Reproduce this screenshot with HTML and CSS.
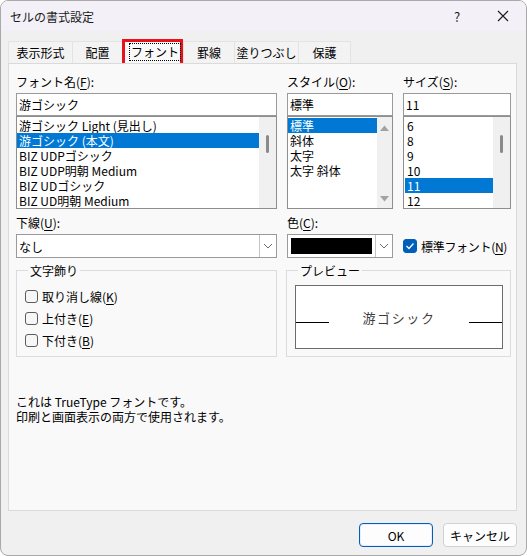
FILE: index.html
```html
<!DOCTYPE html>
<html lang="ja">
<head>
<meta charset="utf-8">
<title>セルの書式設定</title>
<link rel="stylesheet" href="styles.css">
</head>
<body>
<div class="window">
  <div class="titlebar">
    <span class="title">セルの書式設定</span>
    <span class="help">?</span>
    <span class="close">
      <svg width="12" height="12" viewBox="0 0 12 12"><path d="M1 1L11 11M11 1L1 11" stroke="#1a1a1a" stroke-width="1.1" fill="none"/></svg>
    </span>
  </div>
  <div class="body">
    <div class="tabs">
      <div class="tab w1">表示形式</div>
      <div class="tab w2">配置</div>
      <div class="tab active w3"><span class="focus">フォント</span></div>
      <div class="tab w4">罫線</div>
      <div class="tab w5">塗りつぶし</div>
      <div class="tab w6">保護</div>
    </div>
    <div class="panel">
      <div class="grid">
        <div class="col">
          <div class="label">フォント名(<u>F</u>):</div>
          <div class="input">游ゴシック</div>
          <div class="list">
            <div class="items">
              <div class="item">游ゴシック Light (見出し)</div>
              <div class="item sel">游ゴシック (本文)</div>
              <div class="item">BIZ UDPゴシック</div>
              <div class="item">BIZ UDP明朝 Medium</div>
              <div class="item">BIZ UDゴシック</div>
              <div class="item">BIZ UD明朝 Medium</div>
            </div>
            <div class="scroll"><div class="thumb"></div></div>
          </div>
        </div>
        <div class="col">
          <div class="label">スタイル(<u>O</u>):</div>
          <div class="input">標準</div>
          <div class="list">
            <div class="items">
              <div class="item sel">標準</div>
              <div class="item">斜体</div>
              <div class="item">太字</div>
              <div class="item">太字 斜体</div>
            </div>
            <div class="scroll arrows">
              <svg width="9" height="6" viewBox="0 0 9 6"><path d="M0 6L4.5 0.5L9 6Z" fill="#a3a3a3"/></svg>
              <svg width="9" height="6" viewBox="0 0 9 6"><path d="M0 0L4.5 5.5L9 0Z" fill="#a3a3a3"/></svg>
            </div>
          </div>
        </div>
        <div class="col">
          <div class="label">サイズ(<u>S</u>):</div>
          <div class="input">11</div>
          <div class="list">
            <div class="items inset">
              <div class="item">6</div>
              <div class="item">8</div>
              <div class="item">9</div>
              <div class="item">10</div>
              <div class="item sel">11</div>
              <div class="item">12</div>
            </div>
            <div class="scroll"><div class="thumb"></div></div>
          </div>
        </div>

        <div class="col row2">
          <div class="label">下線(<u>U</u>):</div>
          <div class="select">
            <span class="value">なし</span>
            <span class="drop"><svg width="10" height="6" viewBox="0 0 10 6"><path d="M1 1L5 5L9 1" stroke="#6b6b6b" stroke-width="1" fill="none"/></svg></span>
          </div>
        </div>
        <div class="col row2">
          <div class="label">色(<u>C</u>):</div>
          <div class="select">
            <span class="swatch"></span>
            <span class="drop"><svg width="10" height="6" viewBox="0 0 10 6"><path d="M1 1L5 5L9 1" stroke="#6b6b6b" stroke-width="1" fill="none"/></svg></span>
          </div>
        </div>
        <div class="col row2 bottomalign">
          <label class="check normal">
            <span class="box checked"><svg width="10" height="8" viewBox="0 0 10 8"><path d="M1.5 4L4 6.5L8.5 1.5" stroke="#fff" stroke-width="1.3" fill="none"/></svg></span>
            <span class="tight">標準フォント(<u>N</u>)</span>
          </label>
        </div>
      </div>

      <div class="groups">
        <fieldset class="group effects">
          <legend>文字飾り</legend>
          <label class="check"><span class="box"></span><span>取り消し線(<u>K</u>)</span></label>
          <label class="check"><span class="box"></span><span>上付き(<u>E</u>)</span></label>
          <label class="check"><span class="box"></span><span>下付き(<u>B</u>)</span></label>
        </fieldset>
        <fieldset class="group preview">
          <legend>プレビュー</legend>
          <div class="sample">
            <span class="rule"></span>
            <span class="sample-text">游ゴシック</span>
            <span class="rule"></span>
          </div>
        </fieldset>
      </div>

      <div class="note">
        <div>これは TrueType フォントです。</div>
        <div>印刷と画面表示の両方で使用されます。</div>
      </div>
    </div>
    <div class="footer">
      <button class="btn default">OK</button>
      <button class="btn">キャンセル</button>
    </div>
  </div>
</div>
</body>
</html>
```

FILE: styles.css
```css
* { box-sizing: border-box; }
html, body { margin: 0; padding: 0; }
body {
  width: 527px;
  height: 556px;
  background: #ffffff;
  font-family: "Noto Sans CJK JP", "Noto Sans", sans-serif;
  font-size: 12px;
  line-height: 15px;
  color: #000;
}
u { text-decoration-thickness: 1px; text-underline-offset: 2px; }

.window {
  width: 527px;
  height: 556px;
  border: 1px solid #a9a9a9;
  border-radius: 8px;
  overflow: hidden;
  background: #f0f0f0;
  display: flex;
  flex-direction: column;
}

.titlebar {
  height: 30px;
  background: #f3f1f7;
  display: flex;
  align-items: center;
  padding-left: 9px;
}
.title { flex: 1; font-size: 12px; color: #1a1a1a; }
.help { width: 46px; text-align: center; font-size: 13px; color: #1a1a1a; }
.close { width: 46px; display: flex; justify-content: center; align-items: center; }

.body {
  flex: 1;
  display: flex;
  flex-direction: column;
  padding: 10px 9px 0 7px;
}

.tabs { display: flex; height: 22px; align-items: flex-end; }
.tab {
  height: 22px;
  border: 1px solid #e3e3e3;
  border-bottom: none;
  border-right: none;
  background: #f3f3f3;
  display: flex;
  align-items: center;
  justify-content: center;
  color: #000;
  white-space: nowrap;
}
.tab.w1 { width: 64px; }
.tab.w2 { width: 50px; }
.tab.w3 { width: 61px; }
.tab.w4 { width: 51px; }
.tab.w5 { width: 64px; }
.tab.w6 { width: 53px; border-right: 1px solid #e3e3e3; }
.tab.active {
  height: 24px;
  border: 3px solid #e8121c;
  border-bottom: none;
  background: #f9f9f9;
  position: relative;
  z-index: 1;
  padding: 0 0 2px 4px;
  justify-content: flex-start;
}
.focus {
  border: 1px dotted #000;
  padding: 0 1px;
  height: 18px;
  display: flex;
  align-items: center;
  white-space: nowrap;
}

.panel {
  height: 448px;
  border: 1px solid #dadada;
  background: #f9f9f9;
  padding: 10px 7px 0 7px;
}

.grid {
  display: grid;
  grid-template-columns: 261px 106px 108px;
  column-gap: 10px;
}
.col { display: flex; flex-direction: column; }
.label { height: 15px; margin-bottom: 4px; }
.input {
  height: 23px;
  background: #fff;
  border: 1px solid #9a9a9a;
  padding: 3px 0 0 2px;
}
.list {
  height: 93px;
  background: #fff;
  border: 1px solid #8e8e8e;
  display: flex;
}
.items { flex: 1; padding-top: 1px; }
.items.inset { padding-left: 1px; }
.item { height: 15px; padding-left: 2px; white-space: nowrap; overflow: hidden; }
.item.sel { background: #0078d4; color: #fff; }
.scroll {
  width: 17px;
  background: #f0f0f0;
  display: flex;
  flex-direction: column;
  align-items: center;
  padding-top: 18px;
}
.thumb { width: 3px; height: 18px; background: #8a8a8a; border-radius: 2px; }
.scroll.arrows { width: 15px; justify-content: space-between; padding: 8px 0 6px; }

.row2 { margin-top: 6px; }
.bottomalign { justify-content: flex-end; }
.select {
  height: 24px;
  background: #fff;
  border: 1px solid #9a9a9a;
  display: flex;
  align-items: stretch;
}
.select .value { flex: 1; padding: 4px 0 0 2px; }
.select .swatch { flex: 1; margin: 3px 3px 3px 3px; background: #000; }
.drop {
  width: 17px;
  border-left: 1px solid #c4c4c4;
  display: flex;
  align-items: center;
  justify-content: center;
}

.check { display: flex; align-items: center; gap: 4px; height: 22px; }
.check.normal { height: 24px; gap: 4px; }
.tight { letter-spacing: -0.3px; }
.box {
  width: 13px;
  height: 13px;
  border: 1px solid #5c5c5c;
  border-radius: 3px;
  background: #f6f6f6;
  display: flex;
  align-items: center;
  justify-content: center;
}
.box.checked { width: 14px; height: 14px; background: #005fb8; border-color: #005fb8; }

.groups {
  display: grid;
  grid-template-columns: 261px 225px;
  column-gap: 9px;
  margin-top: 5px;
}
.group {
  margin: 0;
  border: 1px solid #dcdcdc;
  height: 94px;
  min-width: 0;
}
.group legend { padding: 0 2px; margin-left: 3px; line-height: 15px; }
.effects { padding: 7px 8px 0 8px; }
.preview { padding: 7px 7px 0 8px; }
.sample {
  height: 64px;
  background: #fff;
  border: 1px solid #6c6c6c;
  display: flex;
  align-items: center;
  justify-content: space-between;
}
.rule { width: 33px; height: 1px; background: #000; margin-top: 10px; }
.sample-text { font-size: 13px; letter-spacing: 1.6px; color: #3c3c3c; }

.note { margin-top: 37px; }

.footer {
  display: flex;
  justify-content: flex-end;
  gap: 10px;
  padding-top: 12px;
}
.btn {
  width: 74px;
  height: 24px;
  font-family: inherit;
  font-size: 12px;
  line-height: 15px;
  background: #fdfdfd;
  border: 1px solid #d0d0d0;
  border-radius: 4px;
  color: #000;
  padding: 0;
}
.btn.default { border: 1px solid #005fb8; box-shadow: inset 0 0 0 1px #e6eef8; }
```
